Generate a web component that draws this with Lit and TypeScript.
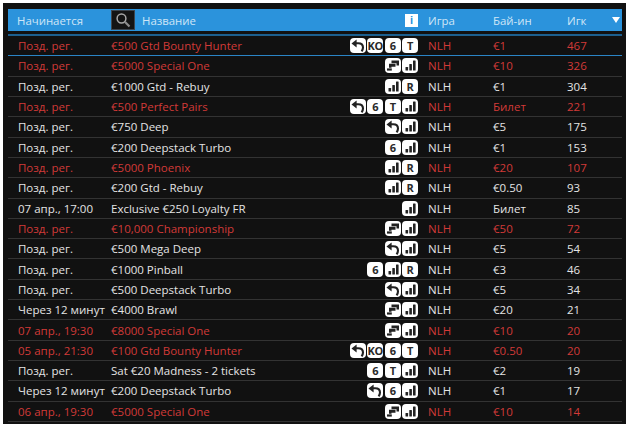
import { LitElement, html, css, svg } from "lit";
import { customElement } from "lit/decorators.js";

type Row = [string, string, string[], string, string, boolean];
const rows: Row[] = [
  ["Позд. рег.", "€500 Gtd Bounty Hunter", ["u", "KO", "6", "T"], "€1", "467", true],
  ["Позд. рег.", "€5000 Special One", ["s", "b"], "€10", "326", true],
  ["Позд. рег.", "€1000 Gtd - Rebuy", ["b", "R"], "€1", "304", false],
  ["Позд. рег.", "€500 Perfect Pairs", ["u", "6", "T", "b"], "Билет", "221", true],
  ["Позд. рег.", "€750 Deep", ["u", "b"], "€5", "175", false],
  ["Позд. рег.", "€200 Deepstack Turbo", ["6", "b"], "€1", "153", false],
  ["Позд. рег.", "€5000 Phoenix", ["b", "R"], "€20", "107", true],
  ["Позд. рег.", "€200 Gtd - Rebuy", ["b", "R"], "€0.50", "93", false],
  ["07 апр., 17:00", "Exclusive €250 Loyalty FR", ["b"], "Билет", "85", false],
  ["Позд. рег.", "€10,000 Championship", ["s", "b"], "€50", "72", true],
  ["Позд. рег.", "€500 Mega Deep", ["u", "b"], "€5", "54", false],
  ["Позд. рег.", "€1000 Pinball", ["6", "b", "R"], "€3", "46", false],
  ["Позд. рег.", "€500 Deepstack Turbo", ["u", "b"], "€5", "34", false],
  ["Через 12 минут", "€4000 Brawl", ["s", "b"], "€20", "21", false],
  ["07 апр., 19:30", "€8000 Special One", ["s", "b"], "€10", "20", true],
  ["05 апр., 21:30", "€100 Gtd Bounty Hunter", ["u", "KO", "6", "T"], "€0.50", "20", true],
  ["Позд. рег.", "Sat €20 Madness - 2 tickets", ["6", "T", "b"], "€2", "19", false],
  ["Через 12 минут", "€200 Deepstack Turbo", ["u", "6", "b"], "€1", "17", false],
  ["06 апр., 19:30", "€5000 Special One", ["s", "b"], "€10", "14", true],
];

const glyphs: Record<string, unknown> = {
  u: svg`<svg viewBox="0 0 16 15" width="16" height="15"><path d="M1.5 5.4 L6.6 1.4 V9.4 Z" fill="#222"/><path d="M6 5.2 H8.2 C11.2 5.2 13 7 13 9.6 C13 10.9 12.5 12.2 11.6 13.4" fill="none" stroke="#222" stroke-width="2.1"/></svg>`,
  b: svg`<svg viewBox="0 0 16 15" width="16" height="15"><g fill="#222"><rect x="3.5" y="9" width="2.6" height="3.5" rx=".5"/><rect x="7.3" y="6" width="2.6" height="6.5" rx=".5"/><rect x="11" y="2.5" width="2.6" height="10" rx=".5"/></g></svg>`,
  s: svg`<svg viewBox="0 0 16 15" width="16" height="15"><g fill="#222"><path d="M6.5 2.5 H14 V7.5 H11.5 V5.2 H6.5 Z"/><path d="M4 5.8 H10.5 V8.8 H6.5 V9.8 H4 Z"/><path d="M2 10.4 H6.8 V12.6 H2 Z"/></g></svg>`,
};

@customElement("app-root")
export class AppRoot extends LitElement {
  static styles = css`
    :host {
      display: block;
      width: 629px;
      height: 424px;
      box-sizing: border-box;
      padding: 3px 3px 0 3px;
      background: #fff;
      font-family: "Open Sans", "Noto Sans", sans-serif;
      font-size: 11.5px;
      overflow: hidden;
    }
    .panel {
      height: 421px;
      box-sizing: border-box;
      background: #111111;
      padding: 6px 4px 0 5px;
    }
    .head,
    .row {
      display: grid;
      grid-template-columns: 103px 1fr 68px 65px 74px 65px;
      align-items: center;
      white-space: nowrap;
    }
    .head {
      height: 22px;
      background: #2b93dc;
      color: #cfe6f7;
      font-size: 11.4px;
    }
    .start {
      padding-left: 9px;
    }
    .search-cell {
      display: flex;
      align-items: center;
      gap: 7px;
    }
    .search {
      width: 24px;
      height: 20px;
      background: #141414;
      border: 1px solid #3c4650;
      box-sizing: border-box;
      display: flex;
      align-items: center;
      justify-content: center;
    }
    .info-cell {
      display: flex;
      justify-content: flex-end;
    }
    .info {
      width: 13px;
      height: 13px;
      background: #fff;
      color: #2b93dc;
      font: bold 11px/13px "Liberation Sans", sans-serif;
      text-align: center;
    }
    .pad {
      padding-left: 10px;
    }
    .sort {
      display: flex;
      justify-content: space-between;
      align-items: center;
      padding-right: 2px;
    }
    .tri {
      width: 0;
      height: 0;
      border-left: 4px solid transparent;
      border-right: 4px solid transparent;
      border-top: 6px solid #fff;
    }
    .rule {
      height: 2px;
      background: #1c5f8f;
      margin-top: 3px;
    }
    .row {
      height: 20.32px;
      box-sizing: border-box;
      border-bottom: 1px solid #333;
      color: #e4e4e4;
    }
    .row.first {
      border-bottom-color: #2b85c6;
    }
    .row.red {
      color: #d23a38;
    }
    .icons {
      display: flex;
      justify-content: flex-end;
      gap: 1.33px;
    }
    .tag {
      width: 16px;
      height: 15px;
      border-radius: 4px;
      background: #fff;
      color: #2a2a2a;
      font: bold 11px/15px "Open Sans", sans-serif;
      letter-spacing: -0.3px;
      flex: none;
      display: flex;
      align-items: center;
      justify-content: center;
    }
    .tag svg {
      display: block;
    }
  `;

  render() {
    return html`<div class="panel">
      <div class="head">
        <div class="start">Начинается</div>
        <div class="search-cell">
          <div class="search">
            <svg viewBox="0 0 18 16" width="18" height="16">
              <circle cx="7.5" cy="6.5" r="4.4" fill="none" stroke="#a8a8a8" stroke-width="1.5" />
              <line x1="10.8" y1="9.8" x2="15.5" y2="14.5" stroke="#8c8c8c" stroke-width="2.2" />
            </svg>
          </div>
          <span>Название</span>
        </div>
        <div class="info-cell"><div class="info">i</div></div>
        <div class="pad">Игра</div>
        <div class="pad">Бай-ин</div>
        <div class="pad sort"><span>Игк</span><span class="tri"></span></div>
      </div>
      <div class="rule"></div>
      <div>
        ${rows.map(
          (r, i) => html`<div class="row ${r[5] ? "red" : ""} ${i === 0 ? "first" : ""}">
            <div class="pad">${r[0]}</div>
            <div>${r[1]}</div>
            <div class="icons">
              ${r[2].map((t) => html`<span class="tag">${glyphs[t] ?? t}</span>`)}
            </div>
            <div class="pad">NLH</div>
            <div class="pad">${r[3]}</div>
            <div class="pad">${r[4]}</div>
          </div>`
        )}
      </div>
    </div>`;
  }
}
